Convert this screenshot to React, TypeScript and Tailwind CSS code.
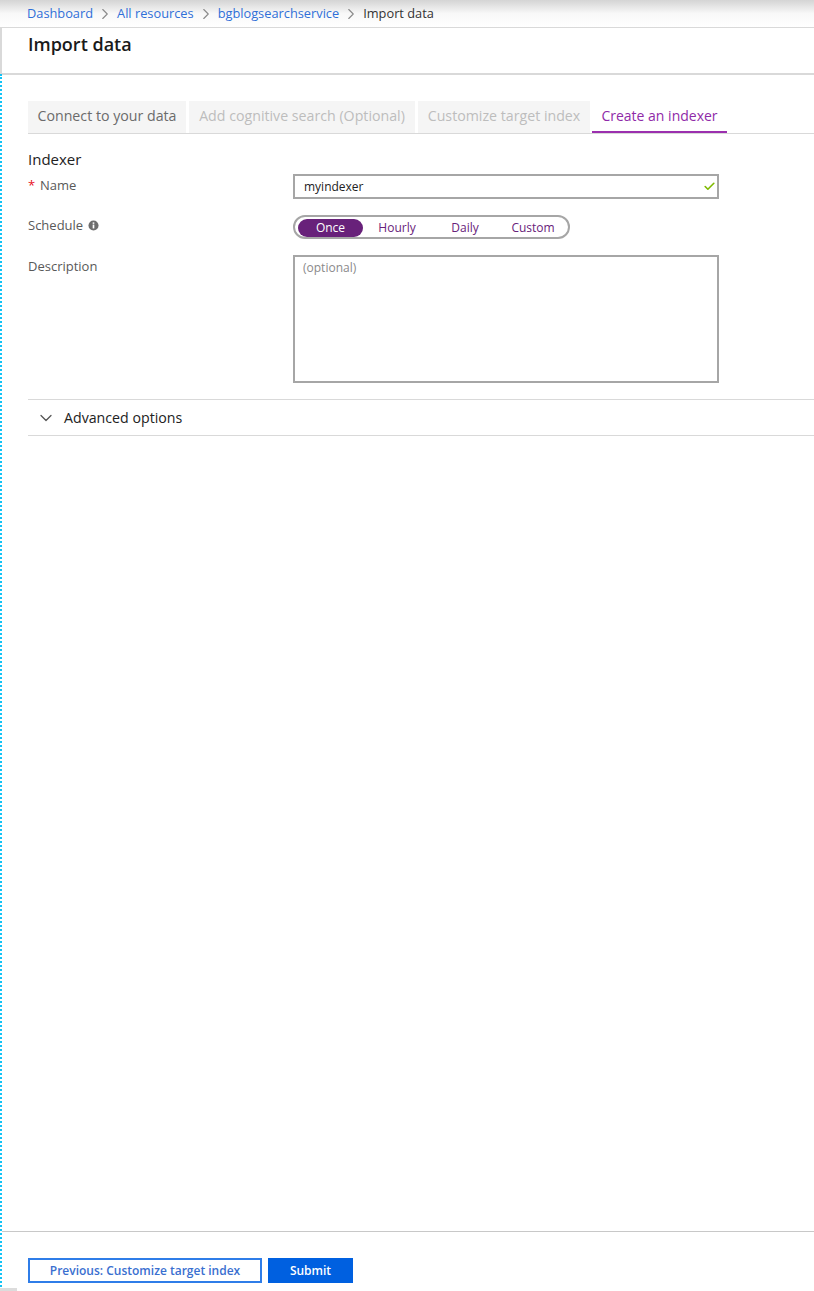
import { Check, ChevronDown, ChevronRight } from 'lucide-react';

const crumbs = ['Dashboard', 'All resources', 'bgblogsearchservice'];

const tabs = [
  { label: 'Connect to your data', width: 'w-[158px]', color: 'text-[#6b6b6b]' },
  { label: 'Add cognitive search (Optional)', width: 'w-[226px]', color: 'text-[#bdbdbd]' },
  { label: 'Customize target index', width: 'w-[172px]', color: 'text-[#bdbdbd]' },
];

const schedule = [
  { label: 'Hourly', width: 'w-[68px]' },
  { label: 'Daily', width: 'w-[68px]' },
  { label: 'Custom', width: 'w-[68px]' },
];

function Breadcrumb() {
  return (
    <div className="flex h-[28px] shrink-0 items-center border-b border-[#d9d9d9] bg-gradient-to-b from-[#d4d4d4] via-[#f8f8f8] to-white pl-[27px] text-[12.8px]">
      {crumbs.map((crumb) => (
        <div key={crumb} className="flex items-center">
          <span className="text-[#2f6fd8]">{crumb}</span>
          <ChevronRight className="mx-[3px] h-[18px] w-[18px] text-[#8a8a8a]" strokeWidth={1.5} />
        </div>
      ))}
      <span className="text-[#333333]">Import data</span>
    </div>
  );
}

function Tabs() {
  return (
    <div className="flex h-[33px] gap-[3px] border-b border-[#d9d9d9]">
      {tabs.map((tab) => (
        <div
          key={tab.label}
          className={`flex h-[32px] items-center justify-center whitespace-nowrap bg-[#f5f5f5] pb-[2px] text-[14.2px] ${tab.width} ${tab.color}`}
        >
          {tab.label}
        </div>
      ))}
      <div className="-ml-[1px] flex h-[32px] w-[135px] items-center justify-center whitespace-nowrap border-b-[2px] border-[#9b2fae] pb-[1px] text-[14px] text-[#8f2aa8]">
        Create an indexer
      </div>
    </div>
  );
}

function InfoIcon() {
  return (
    <svg viewBox="0 0 12 12" className="h-[11px] w-[11px]">
      <circle cx="6" cy="6" r="5.5" fill="#6e6e6e" />
      <rect x="5.1" y="5" width="1.8" height="4.2" fill="white" />
      <rect x="5.1" y="2.6" width="1.8" height="1.6" fill="white" />
    </svg>
  );
}

function IndexerForm() {
  return (
    <div className="grid grid-cols-[265px_426px] content-start">
      <div className="col-span-2 mt-[16px] h-[20px] text-[15px] leading-[18px] text-[#222222]">Indexer</div>

      <div className="mt-[6px] flex h-[18px] items-start text-[13px] leading-[18px] text-[#595959]">
        <span className="w-[12px] text-[#e81123]">*</span>
        Name
      </div>
      <div className="mt-[4px] flex h-[25px] items-center justify-between border-2 border-[#a6a6a6] pl-[9px] pr-[1px] text-[12px] text-[#222222]">
        myindexer
        <Check className="h-[13px] w-[13px] text-[#7fba00]" strokeWidth={3} />
      </div>

      <div className="mt-[17px] flex h-[18px] items-start gap-[5px] text-[13px] leading-[18px] text-[#595959]">
        Schedule
        <div className="mt-[4px]">
          <InfoIcon />
        </div>
      </div>
      <div className="mt-[16px] flex h-[24px] w-[277px] items-center rounded-full border-2 border-[#a6a6a6] pl-[3px] pt-[1px] text-[12px] text-[#68217a]">
        <div className="flex h-[18px] w-[65px] items-center justify-center rounded-full bg-[#68217a] text-white">
          Once
        </div>
        {schedule.map((item) => (
          <div key={item.label} className={`flex justify-center ${item.width}`}>
            {item.label}
          </div>
        ))}
      </div>

      <div className="mt-[18px] h-[18px] text-[13px] leading-[18px] text-[#595959]">Description</div>
      <div className="mt-[16px] h-[128px] border-2 border-[#a6a6a6] pl-[8px] pt-[2px] text-[12px] leading-[18px] text-[#8a8a8a]">
        (optional)
      </div>
    </div>
  );
}

function AdvancedOptions() {
  return (
    <div className="mt-[16px] flex h-[37px] items-center border-y border-[#d9d9d9] pl-[8px] text-[14.2px] text-[#222222]">
      <ChevronDown className="mr-[8px] h-[20px] w-[20px] text-[#555555]" strokeWidth={1.5} />
      Advanced options
    </div>
  );
}

function Footer() {
  return (
    <div className="flex h-[60px] flex-col justify-between border-t border-[#c8c8c8]">
      <div className="flex gap-[6px] pl-[26px] pt-[26px] text-[12px] font-semibold">
        <div className="flex h-[25px] w-[234px] items-center justify-center border-2 border-[#2f7de8] text-[#3a6fd0]">
          Previous: Customize target index
        </div>
        <div className="flex h-[25px] w-[85px] items-center justify-center bg-[#0060e0] text-white">Submit</div>
      </div>
      <div className="-ml-[2px] h-[3px] w-[17px] bg-[#dcdcdc]" />
    </div>
  );
}

export default function App() {
  return (
    <div className="flex h-[1291px] w-[814px] flex-col overflow-hidden bg-white font-['Open_Sans',sans-serif]">
      <Breadcrumb />
      <div className="flex h-[47px] shrink-0 border-b-2 border-l-2 border-[#d9d9d9] pl-[26px] pt-[3px] text-[18px] font-semibold leading-[26px] text-[#1a1a1a]">
        Import data
      </div>
      <div className="-mt-[1px] flex flex-1 flex-col border-l-2 border-dotted border-[#12c2f5] pt-[1px]">
        <div className="flex flex-1 flex-col pl-[26px] pt-[26px]">
          <Tabs />
          <IndexerForm />
          <AdvancedOptions />
        </div>
        <Footer />
      </div>
    </div>
  );
}
